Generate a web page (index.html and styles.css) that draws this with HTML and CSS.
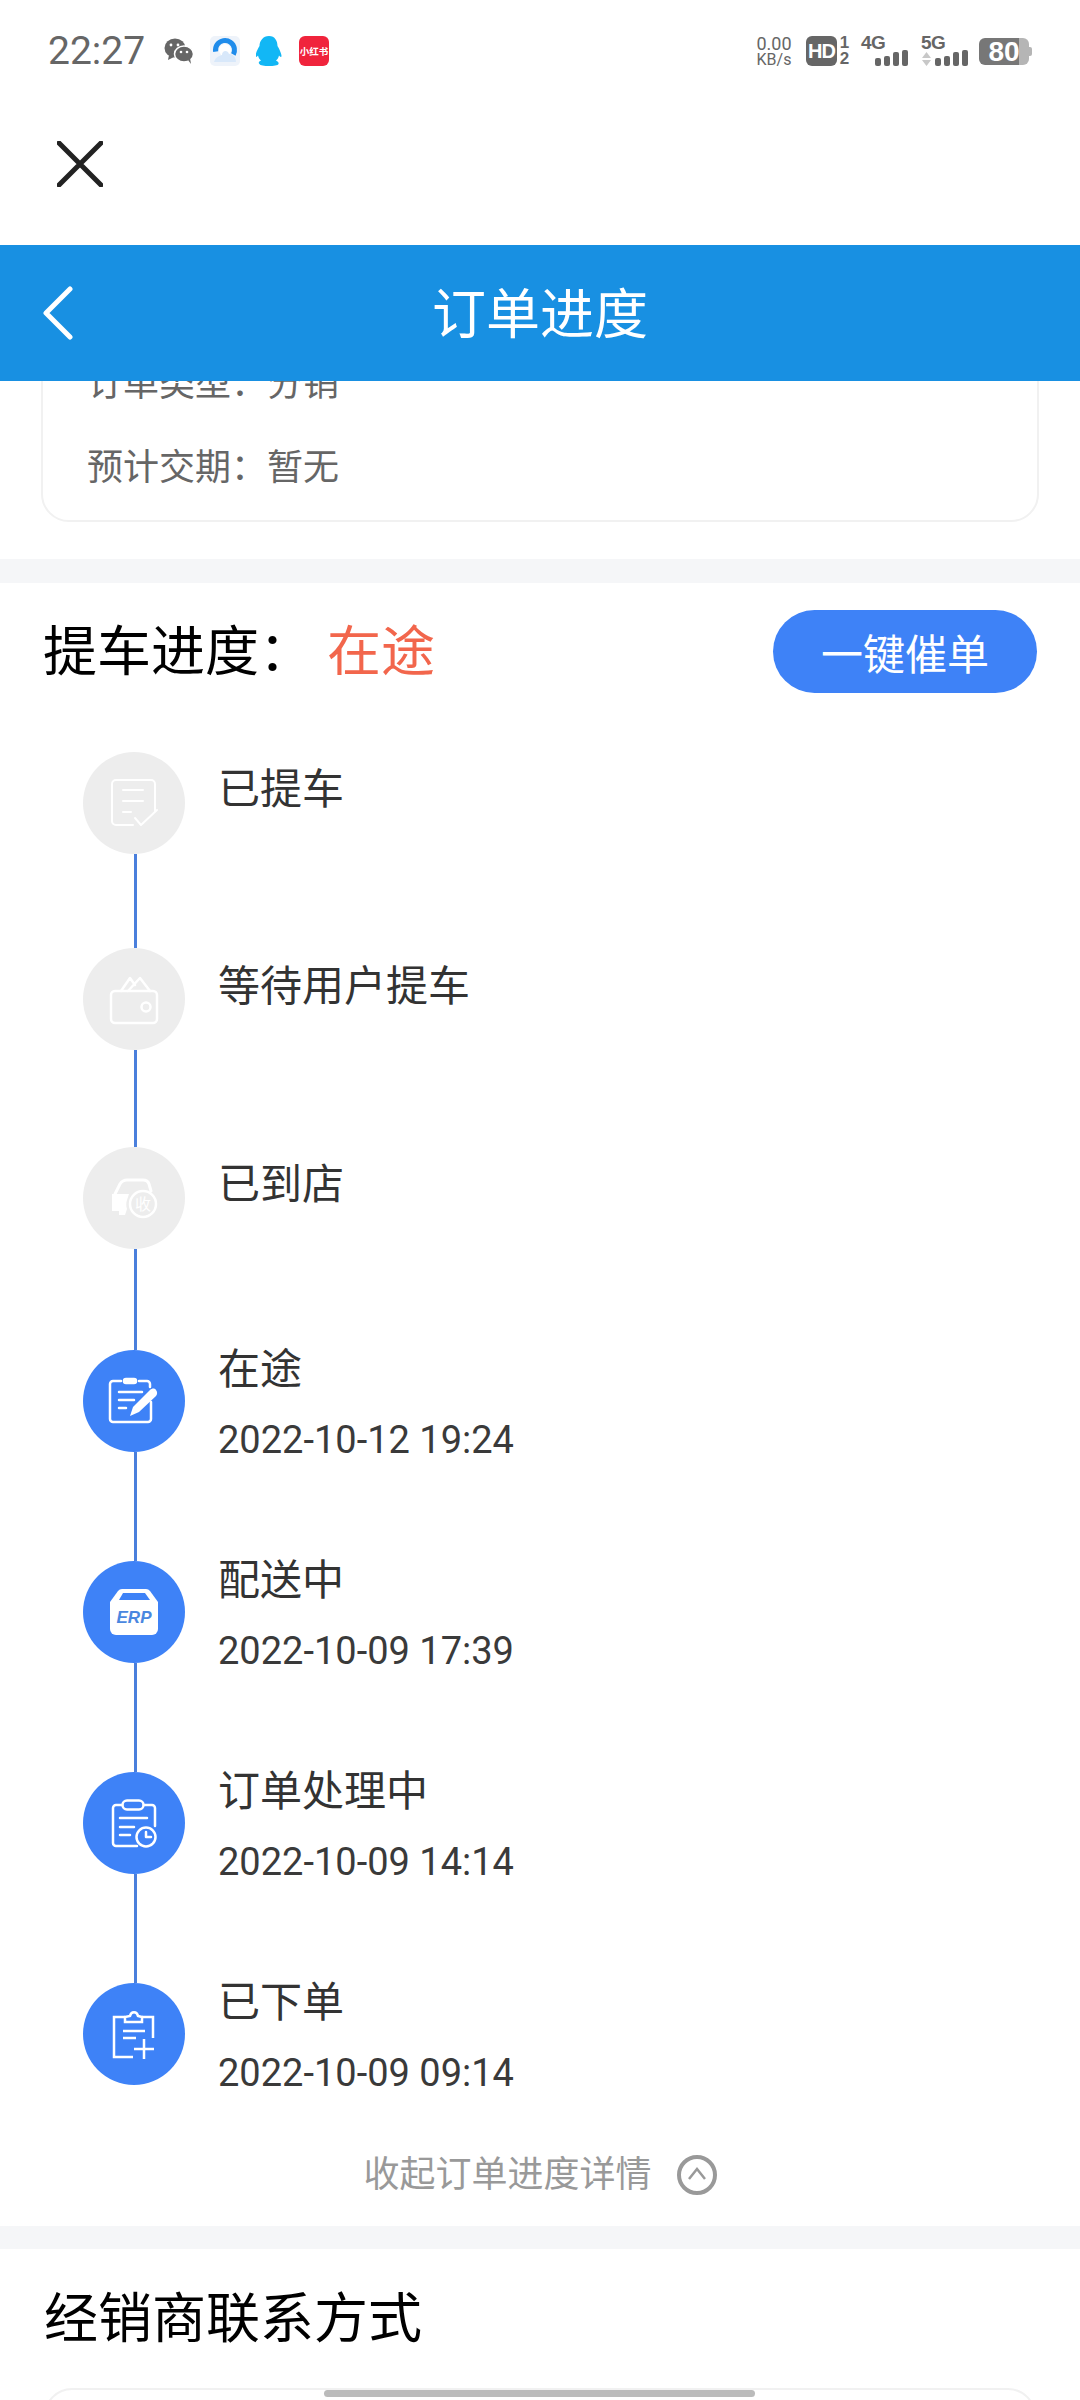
FILE: index.html
```html
<!DOCTYPE html>
<html lang="zh-CN">
<head>
  <meta charset="UTF-8" />
  <meta name="viewport" content="width=device-width,initial-scale=1.0" />
  <title>订单进度</title>
  <link rel="stylesheet" href="styles.css">
</head>
<body>
  <div class="phone">
    <div class="statusbar">
      <div class="status-left">
        <span class="clock">22:27</span>
        <svg class="ic-wechat" width="30" height="26" viewBox="0 0 30 26">
          <ellipse cx="11" cy="10" rx="10.500" ry="9.500" fill="#666"/>
          <path d="M5 17l-1 5 6-3z" fill="#666"/>
          <ellipse cx="20" cy="16" rx="9.500" ry="8" fill="#666" stroke="#fff" stroke-width="1.500"/>
          <path d="M24 22l3 4-1-6z" fill="#666"/>
          <circle cx="7" cy="7" r="1.400" fill="#fff"/><circle cx="14" cy="7" r="1.400" fill="#fff"/>
          <circle cx="17" cy="14" r="1.300" fill="#fff"/><circle cx="23" cy="14" r="1.300" fill="#fff"/>
        </svg>
        <svg width="30" height="30" viewBox="0 0 30 30">
          <rect width="30" height="30" rx="5" fill="#eef3fa"/>
          <circle cx="15" cy="14" r="9.500" fill="none" stroke="#1f8ceb" stroke-width="5" stroke-dasharray="36 40" transform="rotate(170 15 14)"/>
          <circle cx="15" cy="14" r="6" fill="#fff"/>
          <path d="M4 26c2-6 6-6 8-7 0-5 6-5 7-1 4 0 7 3 7 8z" fill="#d8e8fa"/>
        </svg>
        <svg width="26" height="30" viewBox="0 0 26 30">
          <path d="M13 0c6 0 8.500 5 8.500 10 2 3 4 8 4 10 0 1.500-1.500 1-2.500-.5-.5 2-1.500 4-3 5 2 1 3 2 2.500 3.500-.5 1.500-5 2-9.500 2s-9-.5-9.500-2C2 26.500 3 25.500 5 24.500c-1.500-1-2.500-3-3-5-1 1.500-2.500 2-2.500.5 0-2 2-7 4-10C3.500 5 7 0 13 0z" fill="#12b7f5"/>
        </svg>
        <span class="xhs">小红书</span>
      </div>
      <div class="status-right">
        <div class="speed"><span>0.00</span><span class="speed-unit">KB/s</span></div>
        <div class="hd">HD</div>
        <div class="sim-nums"><span>1</span><span>2</span></div>
        <div class="signal">
          <span class="net">4G</span>
          <div class="bars"><i class="b1"></i><i class="b2"></i><i class="b3"></i><i class="b4"></i></div>
        </div>
        <div class="signal">
          <span class="net">5G</span>
          <svg class="updown" width="9" height="14" viewBox="0 0 9 14"><path d="M4.500 0L9 6H0zM0 8h9l-4.500 6z" fill="#c8c8c8"/></svg>
          <div class="bars"><i class="b1"></i><i class="b2"></i><i class="b3"></i><i class="b4"></i></div>
        </div>
        <div class="battery"><span>80</span></div>
      </div>
    </div>

    <div class="close-row">
      <svg width="46" height="46" viewBox="0 0 46 46">
        <path d="M2 2l42 42M44 2L2 44" stroke="#222" stroke-width="5" stroke-linecap="round"/>
      </svg>
    </div>

    <header class="navbar">
      <svg class="nav-back" width="32" height="54" viewBox="0 0 32 54">
        <path d="M28 3L4 27l24 24" fill="none" stroke="#fff" stroke-width="5" stroke-linecap="round" stroke-linejoin="round"/>
      </svg>
      <h1>订单进度</h1>
    </header>

    <section class="info">
      <div class="info-card">
        <p>订单类型：分销</p>
        <p>预计交期：暂无</p>
      </div>
    </section>

    <section class="progress">
      <div class="progress-head">
        <h2>提车进度：<em>在途</em></h2>
        <button class="urge">一键催单</button>
      </div>

      <ol class="steps">
        <li class="step step-a">
          <div class="rail">
            <span class="dot dot-off">
              <svg viewBox="0 0 102 102" fill="none" stroke="#fff" stroke-width="2" stroke-linecap="round" stroke-linejoin="round">
                <path d="M50 73H33a4 4 0 0 1-4-4V32a4 4 0 0 1 4-4h35a4 4 0 0 1 4 4v27"/>
                <path d="M40 38h20M40 49h20M40 60h8M52 66l6 7 16-15"/>
              </svg>
            </span>
            <span class="line"></span>
          </div>
          <div class="step-text"><h3>已提车</h3></div>
        </li>
        <li class="step step-b">
          <div class="rail">
            <span class="dot dot-off">
              <svg viewBox="0 0 102 102" fill="none" stroke="#fff" stroke-width="2.500" stroke-linecap="round" stroke-linejoin="round">
                <rect x="28" y="43" width="46" height="32" rx="4"/>
                <circle cx="63" cy="59" r="4.500"/>
                <path d="M38 43l9-13 5 7M45 43l12-13 10 13"/>
              </svg>
            </span>
            <span class="line"></span>
          </div>
          <div class="step-text"><h3>等待用户提车</h3></div>
        </li>
        <li class="step step-c">
          <div class="rail">
            <span class="dot dot-off">
              <svg viewBox="0 0 102 102" fill="none" stroke="#fff" stroke-width="3" stroke-linecap="round" stroke-linejoin="round">
                <path d="M32 47l5-10c2-3 4-4 7-4h16c3 0 5 1 6 4l2 7"/>
                <path d="M29 47h17l-2 6c-1 3-1 6 0 9l-2 6h-6v-4h-7z" fill="#fff" stroke="none"/>
                <circle cx="60" cy="57" r="13" stroke-width="2.500"/>
                <text class="dot-mark" x="60" y="63">收</text>
              </svg>
            </span>
            <span class="line"></span>
          </div>
          <div class="step-text"><h3>已到店</h3></div>
        </li>
        <li class="step step-dated">
          <div class="rail">
            <span class="dot">
              <svg viewBox="0 0 102 102" fill="none" stroke="#fff" stroke-width="2.500" stroke-linecap="round" stroke-linejoin="round">
                <path d="M38 31h-8a3 3 0 0 0-3 3v35a3 3 0 0 0 3 3h35a3 3 0 0 0 3-3V52M56 31h8a3 3 0 0 1 3 3v3"/>
                <rect x="41" y="29" width="12" height="4" rx="2" fill="#fff"/>
                <path d="M36 42h23M36 50h15M36 58h7"/>
                <path d="M47 66l3-9 17-17c2-2 5-2 6 0 1.500 2 1.500 4 0 6L56 62z" fill="#fff" stroke="none"/>
              </svg>
            </span>
            <span class="line"></span>
          </div>
          <div class="step-text"><h3>在途</h3><time>2022-10-12 19:24</time></div>
        </li>
        <li class="step step-dated">
          <div class="rail">
            <span class="dot">
              <svg viewBox="0 0 102 102">
                <path d="M27 41l8-11a5 5 0 0 1 4-2h24a5 5 0 0 1 4 2l8 11v27a6 6 0 0 1-6 6H33a6 6 0 0 1-6-6z" fill="#fff"/>
                <path d="M40 32h22l5 7H36z" fill="#3e82f7"/>
                <text class="dot-erp" x="51" y="62">ERP</text>
              </svg>
            </span>
            <span class="line"></span>
          </div>
          <div class="step-text"><h3>配送中</h3><time>2022-10-09 17:39</time></div>
        </li>
        <li class="step step-dated">
          <div class="rail">
            <span class="dot">
              <svg viewBox="0 0 102 102" fill="none" stroke="#fff" stroke-width="2.500" stroke-linecap="round" stroke-linejoin="round">
                <path d="M39 33h-6a3 3 0 0 0-3 3v35a3 3 0 0 0 3 3h21M61 33h8a3 3 0 0 1 3 3v18"/>
                <rect x="39.500" y="28.500" width="21" height="9" rx="4.500"/>
                <path d="M37 46h27M37 55h14M37 63h10"/>
                <circle cx="63" cy="65" r="9.500"/>
                <path d="M63 60v5h5"/>
              </svg>
            </span>
            <span class="line"></span>
          </div>
          <div class="step-text"><h3>订单处理中</h3><time>2022-10-09 14:14</time></div>
        </li>
        <li class="step step-dated step-last">
          <div class="rail">
            <span class="dot">
              <svg viewBox="0 0 102 102" fill="none" stroke="#fff" stroke-width="2.500">
                <path d="M42 34H31v40h19M59 34h11v21"/>
                <path d="M42 39v-5l5-1c1-5 7-5 8 0l4 1v5z"/>
                <path d="M40 48h22M40 55h13M61 56v20M51 66h20"/>
              </svg>
            </span>
          </div>
          <div class="step-text"><h3>已下单</h3><time>2022-10-09 09:14</time></div>
        </li>
      </ol>

      <div class="collapse">
        <span>收起订单进度详情</span>
        <svg class="collapse-ic" width="40" height="40" viewBox="0 0 40 40" fill="none" stroke="#999">
          <circle cx="20" cy="20" r="18" stroke-width="4"/>
          <path d="M12 24l8-10 8 10" stroke-width="2.500"/>
        </svg>
      </div>
    </section>

    <section class="dealer">
      <h2>经销商联系方式</h2>
      <div class="dealer-card"></div>
    </section>

    <div class="scrollbar"></div>
  </div>
</body>
</html>
```

FILE: styles.css
```css
* { margin: 0; padding: 0; box-sizing: border-box; }
html, body { width: 1080px; height: 2400px; overflow: hidden; }
body {
  background: #fff;
  font-family: "Noto Sans CJK SC", "Noto Sans", sans-serif;
}
.phone {
  position: relative;
  width: 1080px;
  height: 2400px;
  overflow: hidden;
  background: #f5f6f8;
}

/* status bar */
.statusbar {
  height: 100px;
  background: #fff;
  display: flex;
  justify-content: space-between;
  align-items: center;
  padding: 2px 51px 0 48px;
  color: #666;
}
.status-left, .status-right { display: flex; align-items: center; }
.status-left svg { margin-left: 16px; }
.status-left .ic-wechat { margin-left: 19px; }
.clock {
  font-family: Roboto, sans-serif;
  font-size: 39px;
  line-height: 38px;
}
.xhs {
  width: 30px;
  height: 30px;
  margin-left: 17px;
  border-radius: 6px;
  background: #f0243c;
  color: #fff;
  font-size: 9.500px;
  font-weight: 700;
  line-height: 30px;
  text-align: center;
  white-space: nowrap;
}
.speed {
  display: flex;
  flex-direction: column;
  align-items: center;
  width: 38px;
  font-family: Roboto, sans-serif;
  font-size: 18px;
  line-height: 16px;
}
.speed-unit { font-size: 16px; line-height: 15px; }
.hd {
  width: 31px;
  height: 30px;
  margin-left: 13px;
  border-radius: 6px;
  background: #666;
  color: #fff;
  font-family: "Liberation Sans", sans-serif;
  font-size: 20px;
  font-weight: 700;
  line-height: 30px;
  text-align: center;
  letter-spacing: -1px;
}
.sim-nums {
  display: flex;
  flex-direction: column;
  width: 11px;
  margin-left: 2px;
  font-family: "Liberation Sans", sans-serif;
  font-size: 17px;
  font-weight: 700;
  line-height: 16px;
  text-align: center;
}
.signal {
  position: relative;
  width: 47px;
  height: 30px;
  margin-left: 11px;
}
.signal + .signal { margin-left: 13px; }
.net {
  position: absolute;
  left: 0;
  top: -2px;
  font-family: "Liberation Sans", sans-serif;
  font-size: 19px;
  font-weight: 700;
  line-height: 18px;
  letter-spacing: -0.5px;
}
.updown { position: absolute; left: 1px; bottom: 0; }
.bars {
  position: absolute;
  right: 0;
  bottom: 0;
  display: flex;
  align-items: flex-end;
  gap: 3px;
}
.bars i { display: block; width: 6px; background: #666; border-radius: 2px; }
.bars .b1 { height: 8px; }
.bars .b2 { height: 10px; }
.bars .b3 { height: 14px; }
.bars .b4 { height: 16px; }
.battery {
  position: relative;
  width: 50px;
  height: 27px;
  margin-left: 11px;
  border-radius: 6px;
  background: linear-gradient(90deg, #777 0 80%, #b5b5b5 80% 100%);
  color: #fff;
  font-family: "Liberation Sans", sans-serif;
  font-size: 28px;
  font-weight: 700;
  line-height: 27px;
  text-align: center;
}
.battery::after {
  content: "";
  position: absolute;
  right: -3px;
  top: 9px;
  width: 3px;
  height: 9px;
  border-radius: 0 2px 2px 0;
  background: #b5b5b5;
}

.close-row {
  height: 145px;
  background: #fff;
  padding: 41px 0 0 57px;
}

.navbar {
  position: relative;
  z-index: 2;
  height: 136px;
  background: #1890e2;
  display: flex;
  align-items: center;
  justify-content: center;
}
.navbar h1 {
  padding-bottom: 5px;
  font-size: 54px;
  font-weight: 400;
  color: #fff;
}
.nav-back { position: absolute; left: 42px; top: 41px; }

/* clipped order info */
.info {
  height: 178px;
  background: #fff;
  display: flex;
  flex-direction: column;
  justify-content: flex-end;
  padding: 0 41px 37px;
  overflow: hidden;
}
.info-card {
  flex: none;
  border: 2px solid #f1f1f1;
  border-radius: 28px;
  padding: 0 44px 15px;
  font-size: 36px;
  line-height: 81px;
  color: #666;
}
.info-card p { height: 81px; }
.info-card p + p { margin-top: 3px; }

.progress {
  margin-top: 24px;
  height: 1643px;
  background: #fff;
  padding: 27px 43px 0;
}
.progress-head {
  display: flex;
  justify-content: space-between;
  align-items: center;
  height: 83px;
}
.progress-head h2, .dealer h2 {
  font-size: 54px;
  font-weight: 400;
  color: #000;
}
.progress-head h2 { padding-bottom: 8px; }
.progress-head em {
  font-style: normal;
  color: #f2664c;
  margin-left: 14px;
}
.urge {
  width: 264px;
  height: 83px;
  border: none;
  border-radius: 42px;
  background: #3e82f7;
  color: #fff;
  font-family: inherit;
  font-size: 42px;
}

/* timeline */
.steps {
  list-style: none;
  margin: 59px 0 0 40px;
}
.step {
  display: flex;
  height: 211px;
}
.step-a { height: 196px; }
.step-b { height: 199px; }
.step-c { height: 203px; }
.step-last { height: 102px; }
.rail {
  width: 102px;
  display: flex;
  flex-direction: column;
  align-items: center;
}
.dot {
  flex: none;
  width: 102px;
  height: 102px;
  border-radius: 50%;
  background: #3e82f7;
}
.dot svg { display: block; width: 102px; height: 102px; }
.dot-off { background: #ededed; }
.dot-mark {
  font-size: 16px;
  fill: #fff;
  stroke: none;
  text-anchor: middle;
}
.dot-erp {
  font-family: "Liberation Sans", sans-serif;
  font-size: 17px;
  font-weight: 700;
  font-style: italic;
  fill: #4a87e0;
  text-anchor: middle;
}
.line {
  flex: 1;
  width: 3px;
  margin-left: 3px;
  background: #4a7fdc;
}
.step-text {
  margin-left: 33px;
  padding-top: 4px;
}
.step-b .step-text { padding-top: 5px; }
.step-dated .step-text { padding-top: 0; margin-top: -14px; }
.step-text h3 {
  font-size: 42px;
  font-weight: 400;
  line-height: 60px;
  color: #333;
}
.step-text time {
  display: block;
  margin-top: 20px;
  font-family: Roboto, sans-serif;
  font-size: 38px;
  line-height: 48px;
  color: #3a3a3a;
}

.collapse {
  display: flex;
  justify-content: center;
  align-items: center;
  gap: 25px;
  height: 40px;
  margin-top: 66px;
  font-size: 36px;
  color: #999;
}
.collapse-ic { margin-top: 8px; }

.dealer {
  margin-top: 23px;
  height: 160px;
  background: #fff;
  padding: 27px 44px 0;
}
.dealer h2 { line-height: 78px; }
.dealer-card {
  margin-top: 34px;
  height: 60px;
  border: 2px solid #f1f1f1;
  border-radius: 28px;
}

.scrollbar {
  position: absolute;
  left: 324px;
  bottom: 3px;
  width: 431px;
  height: 7px;
  border-radius: 4px;
  background: #bbb;
}
```
